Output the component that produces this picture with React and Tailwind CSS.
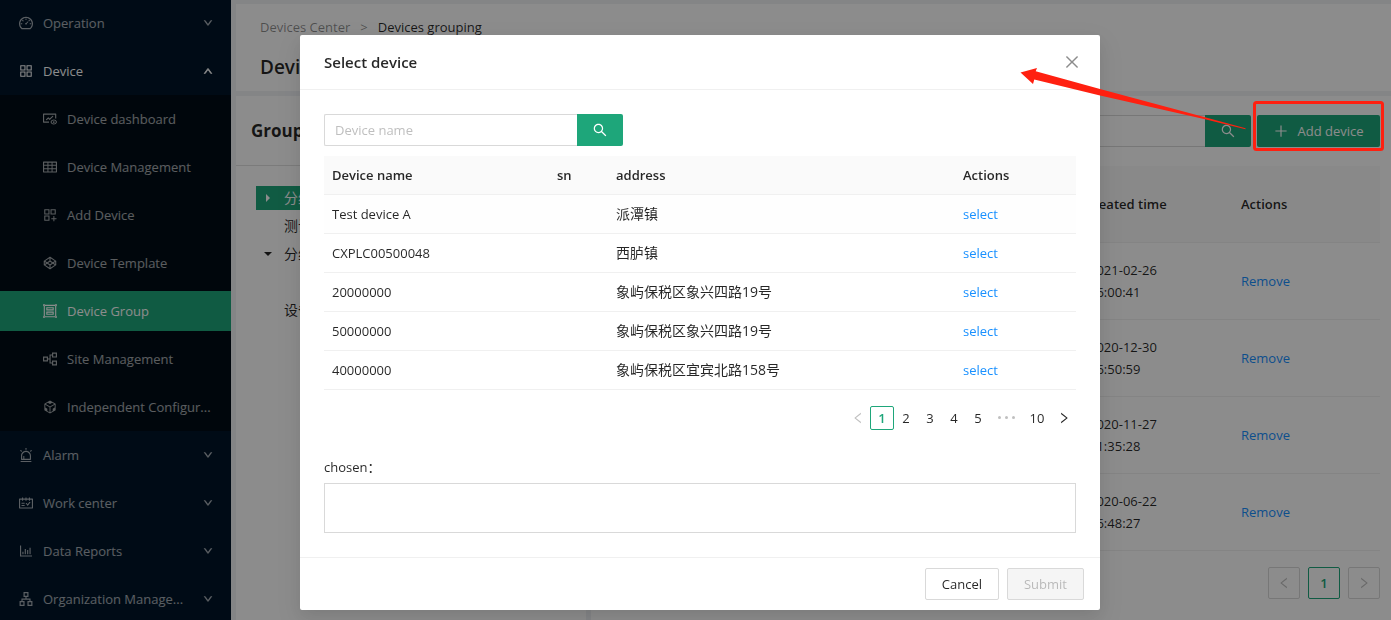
import {
  AiOutlineAlert,
  AiOutlineApartment,
  AiOutlineAppstore,
  AiOutlineAppstoreAdd,
  AiOutlineBarChart,
  AiOutlineClose,
  AiOutlineCodepen,
  AiOutlineCodeSandbox,
  AiOutlineDashboard,
  AiOutlineDown,
  AiOutlineFundView,
  AiOutlineGroup,
  AiOutlineLeft,
  AiOutlinePlus,
  AiOutlineRight,
  AiOutlineSchedule,
  AiOutlineSearch,
  AiOutlineTable,
  AiOutlineUp,
} from 'react-icons/ai'

const DEVICE_MENU = [
  { label: 'Device dashboard', icon: AiOutlineFundView },
  { label: 'Device Management', icon: AiOutlineTable },
  { label: 'Add Device', icon: AiOutlineAppstoreAdd, iconClass: '-scale-x-100' },
  { label: 'Device Template', icon: AiOutlineCodepen },
  { label: 'Device Group', icon: AiOutlineGroup, active: true },
  { label: 'Site Management', icon: AiOutlineApartment, iconClass: '-rotate-90' },
  { label: 'Independent Configur...', icon: AiOutlineCodeSandbox },
]

const MENU = [
  { label: 'Operation', icon: AiOutlineDashboard },
  { label: 'Device', icon: AiOutlineAppstore, children: DEVICE_MENU },
  { label: 'Alarm', icon: AiOutlineAlert },
  { label: 'Work center', icon: AiOutlineSchedule },
  { label: 'Data Reports', icon: AiOutlineBarChart },
  { label: 'Organization Manage...', icon: AiOutlineApartment },
]

const TREE = [
  { label: '分组一', caret: 'right', selected: true },
  { label: '测试' },
  { label: '分组二', caret: 'down' },
  { label: '' },
  { label: '设备组' },
]

const GROUP_DEVICES = [
  { date: '2021-02-26', time: '16:00:41' },
  { date: '2020-12-30', time: '16:50:59' },
  { date: '2020-11-27', time: '11:35:28' },
  { date: '2020-06-22', time: '16:48:27' },
]

const DEVICES = [
  { name: 'Test device A', address: '派潭镇' },
  { name: 'CXPLC00500048', address: '西胪镇' },
  { name: '20000000', address: '象屿保税区象兴四路19号' },
  { name: '50000000', address: '象屿保税区象兴四路19号' },
  { name: '40000000', address: '象屿保税区宜宾北路158号' },
]

function Sidebar() {
  return (
    <nav className="w-[231px] shrink-0 overflow-hidden bg-[#001529] text-white/65">
      <ul className="-mt-px">
        {MENU.map(({ label, icon: Icon, children }) => (
          <li key={label} className="flow-root">
            <button
              type="button"
              className={`my-1 flex h-10 w-full items-center pr-[18px] pl-[18px] ${children ? 'text-white' : ''}`}
            >
              <Icon className="size-4 shrink-0" />
              <span className="ml-[9px] flex-1 text-left whitespace-nowrap">{label}</span>
              {children ? (
                <AiOutlineUp className="size-[10px] stroke-[90]" />
              ) : (
                <AiOutlineDown className="size-[10px] stroke-[90] text-white/50" />
              )}
            </button>
            {children && (
              <ul className="flow-root bg-[#000c17]">
                {children.map(({ label: text, icon: SubIcon, iconClass = '', active }) => (
                  <li key={text} className={`my-1 h-10 not-first:mt-2 ${active ? 'bg-[#1ea67a] text-white' : ''}`}>
                    <a href="#" className="flex h-full items-center pl-[42px]">
                      <SubIcon className={`size-4 shrink-0 ${iconClass}`} />
                      <span className="ml-[9px] whitespace-nowrap">{text}</span>
                    </a>
                  </li>
                ))}
              </ul>
            )}
          </li>
        ))}
      </ul>
    </nav>
  )
}

function GroupTree() {
  return (
    <section className="w-[350px] shrink-0 bg-white">
      <h2 className="flex h-[70px] items-center border-b border-[#e0e0e0] px-[15px] text-[17px] font-bold">Grouping</h2>
      <ul className="px-5 pt-5 text-sm">
        {TREE.map(({ label, caret, selected }, i) => (
          <li key={i} className={`mb-1 flex h-6 items-center ${selected ? 'bg-[#1ea67a] text-white' : ''}`}>
            <span className="flex w-6 justify-center">
              {caret && (
                <svg viewBox="0 0 8 8" className={`size-2 fill-current ${caret === 'down' ? 'rotate-90' : ''}`}>
                  <path d="M2 0l4 4-4 4z" />
                </svg>
              )}
            </span>
            <span className="pl-1">{label}</span>
          </li>
        ))}
      </ul>
    </section>
  )
}

function GroupDevices() {
  return (
    <section className="min-w-0 flex-1 bg-white px-[11px] pt-[19px]">
      <div className="flex justify-end">
        <input
          aria-label="Search devices"
          className="h-8 w-64 rounded-l-xs border border-r-0 border-[#d9d9d9] px-3"
        />
        <button
          type="button"
          aria-label="Search"
          className="flex h-8 w-[46px] items-center justify-center rounded-r-xs bg-[#1ea67a] text-white"
        >
          <AiOutlineSearch className="size-4" />
        </button>
        <button
          type="button"
          className="ml-[6px] flex h-8 w-[123px] items-center justify-center gap-2 rounded-xs bg-[#1ea67a] font-medium whitespace-nowrap text-white"
        >
          <AiOutlinePlus className="size-4" />
          Add device
        </button>
      </div>

      <table className="mt-[19px] w-full table-fixed text-left">
        <thead>
          <tr className="h-[76px] border-b border-[#f0f0f0] bg-[#fafafa]">
            <td />
            <th className="w-[156px] px-4 font-semibold">Created time</th>
            <th className="w-[155px] px-4 font-semibold">Actions</th>
          </tr>
        </thead>
        <tbody>
          {GROUP_DEVICES.map(({ date, time }) => (
            <tr key={date} className="h-[77px] border-b border-[#f0f0f0]">
              <td />
              <td className="px-5">
                {date}
                <br />
                {time}
              </td>
              <td className="px-4">
                <a href="#" className="text-[#1890ff]">
                  Remove
                </a>
              </td>
            </tr>
          ))}
        </tbody>
      </table>

      <div className="mt-4 flex justify-end gap-2">
        <button
          type="button"
          disabled
          aria-label="Previous page"
          className="flex size-8 items-center justify-center rounded-xs border border-[#d9d9d9] text-black/25"
        >
          <AiOutlineLeft className="size-[14px]" />
        </button>
        <button type="button" className="size-8 rounded-xs border border-[#1ea67a] font-semibold text-[#1ea67a]">
          1
        </button>
        <button
          type="button"
          disabled
          aria-label="Next page"
          className="flex size-8 items-center justify-center rounded-xs border border-[#d9d9d9] text-black/25"
        >
          <AiOutlineRight className="size-[14px]" />
        </button>
      </div>
    </section>
  )
}

function DevicePagination() {
  return (
    <div className="mt-4 flex items-center justify-end">
      <button
        type="button"
        disabled
        aria-label="Previous page"
        className="flex size-6 items-center justify-center text-black/25"
      >
        <AiOutlineLeft className="size-[14px]" />
      </button>
      <button type="button" className="size-6 rounded-xs border border-[#1ea67a] font-semibold text-[#1ea67a]">
        1
      </button>
      {[2, 3, 4, 5].map((page) => (
        <button key={page} type="button" className="size-6">
          {page}
        </button>
      ))}
      <button type="button" aria-label="Next 5 pages" className="flex h-6 w-8 items-center justify-center gap-1">
        <span className="size-[3px] rounded-full bg-black/25" />
        <span className="size-[3px] rounded-full bg-black/25" />
        <span className="size-[3px] rounded-full bg-black/25" />
      </button>
      <button type="button" className="h-6 w-[30px]">
        10
      </button>
      <button type="button" aria-label="Next page" className="flex size-6 items-center justify-center">
        <AiOutlineRight className="size-[14px]" />
      </button>
    </div>
  )
}

function SelectDeviceModal() {
  return (
    <div className="fixed inset-0 z-10 flex items-start justify-center bg-black/45 pt-[35px] pl-[9px]">
      <div
        role="dialog"
        aria-labelledby="select-device-title"
        className="w-[800px] rounded-xs bg-white shadow-[0_6px_16px_rgba(0,0,0,0.08),0_9px_28px_8px_rgba(0,0,0,0.05)]"
      >
        <div className="flex h-[55px] items-center justify-between border-b border-[#f0f0f0] pr-[19px] pl-6">
          <h3 id="select-device-title" className="text-[15px] font-semibold">
            Select device
          </h3>
          <button type="button" aria-label="Close" className="text-black/45">
            <AiOutlineClose className="size-[18px]" />
          </button>
        </div>

        <div className="p-6">
          <div className="flex">
            <input
              aria-label="Device name"
              placeholder="Device name"
              className="h-8 w-[253px] rounded-l-xs border border-r-0 border-[#d9d9d9] px-[10px] placeholder:text-[#bfbfbf]"
            />
            <button
              type="button"
              aria-label="Search"
              className="flex h-8 w-[46px] items-center justify-center rounded-r-xs bg-[#1ea67a] text-white"
            >
              <AiOutlineSearch className="size-4" />
            </button>
          </div>

          <table className="mt-[10px] w-full table-fixed text-left">
            <thead>
              <tr className="h-[38px] border-b border-[#f0f0f0] bg-[#fafafa]">
                <th className="w-[225px] px-2 font-semibold">Device name</th>
                <th className="w-[59px] px-2 font-semibold">sn</th>
                <th className="px-2 font-semibold">address</th>
                <th className="w-[121px] px-2 font-semibold">Actions</th>
              </tr>
            </thead>
            <tbody>
              {DEVICES.map(({ name, address }) => (
                <tr key={name} className="h-[39px] border-b border-[#f0f0f0] first:bg-[#fefefe]">
                  <td className="px-2">{name}</td>
                  <td />
                  <td className="px-2 text-sm leading-[22px]">{address}</td>
                  <td className="px-2">
                    <a href="#" className="text-[#1890ff]">
                      select
                    </a>
                  </td>
                </tr>
              ))}
            </tbody>
          </table>

          <DevicePagination />

          <p className="mt-[26px]">chosen：</p>
          <div className="mt-[5px] h-[50px] border border-[#d9d9d9]" />
        </div>

        <div className="flex justify-end gap-2 border-t border-[#f0f0f0] px-4 py-[10px]">
          <button type="button" className="h-8 rounded-xs border border-[#d9d9d9] px-4">
            Cancel
          </button>
          <button
            type="button"
            disabled
            className="h-8 rounded-xs border border-[#d9d9d9] bg-[#f5f5f5] px-4 text-black/25"
          >
            Submit
          </button>
        </div>
      </div>
    </div>
  )
}

// Red frame around "Add device" with an arrow to the dialog it opens
function Callout() {
  return (
    <svg
      viewBox="0 0 391 200"
      className="pointer-events-none fixed top-0 right-0 z-20 h-[200px] w-[391px]"
      fill="#ff2010"
      aria-hidden="true"
    >
      <rect x="254.5" y="102.5" width="128" height="47" rx="2" fill="none" stroke="#ff2010" strokeWidth="3" />
      <path d="M20.5 72.5L37 68l-1.300 3.300L100 89l105 28.300L245.500 128.300v1L205 119.300 100 95.500 34.300 79.500 33 84z" />
    </svg>
  )
}

export default function App() {
  return (
    <div className="flex h-screen overflow-hidden bg-[#f0f2f5] font-['Open_Sans','Noto_Sans_CJK_SC',sans-serif] text-[13px] leading-[22px] text-black/85">
      <Sidebar />
      <main className="flex min-w-0 flex-1 flex-col gap-[5px] pt-1 pl-[5px]">
        <header className="h-[87px] shrink-0 bg-white px-6 pt-3">
          <nav aria-label="Breadcrumb" className="flex gap-[10px] text-black/45">
            <a href="#">Devices Center</a>
            <span>&gt;</span>
            <span className="text-black/85">Devices grouping</span>
          </nav>
          <h1 className="mt-[17px] text-[19px] leading-6 font-semibold">Devices grouping</h1>
        </header>
        <div className="flex flex-1 gap-[5px]">
          <GroupTree />
          <GroupDevices />
        </div>
      </main>
      <SelectDeviceModal />
      <Callout />
    </div>
  )
}
